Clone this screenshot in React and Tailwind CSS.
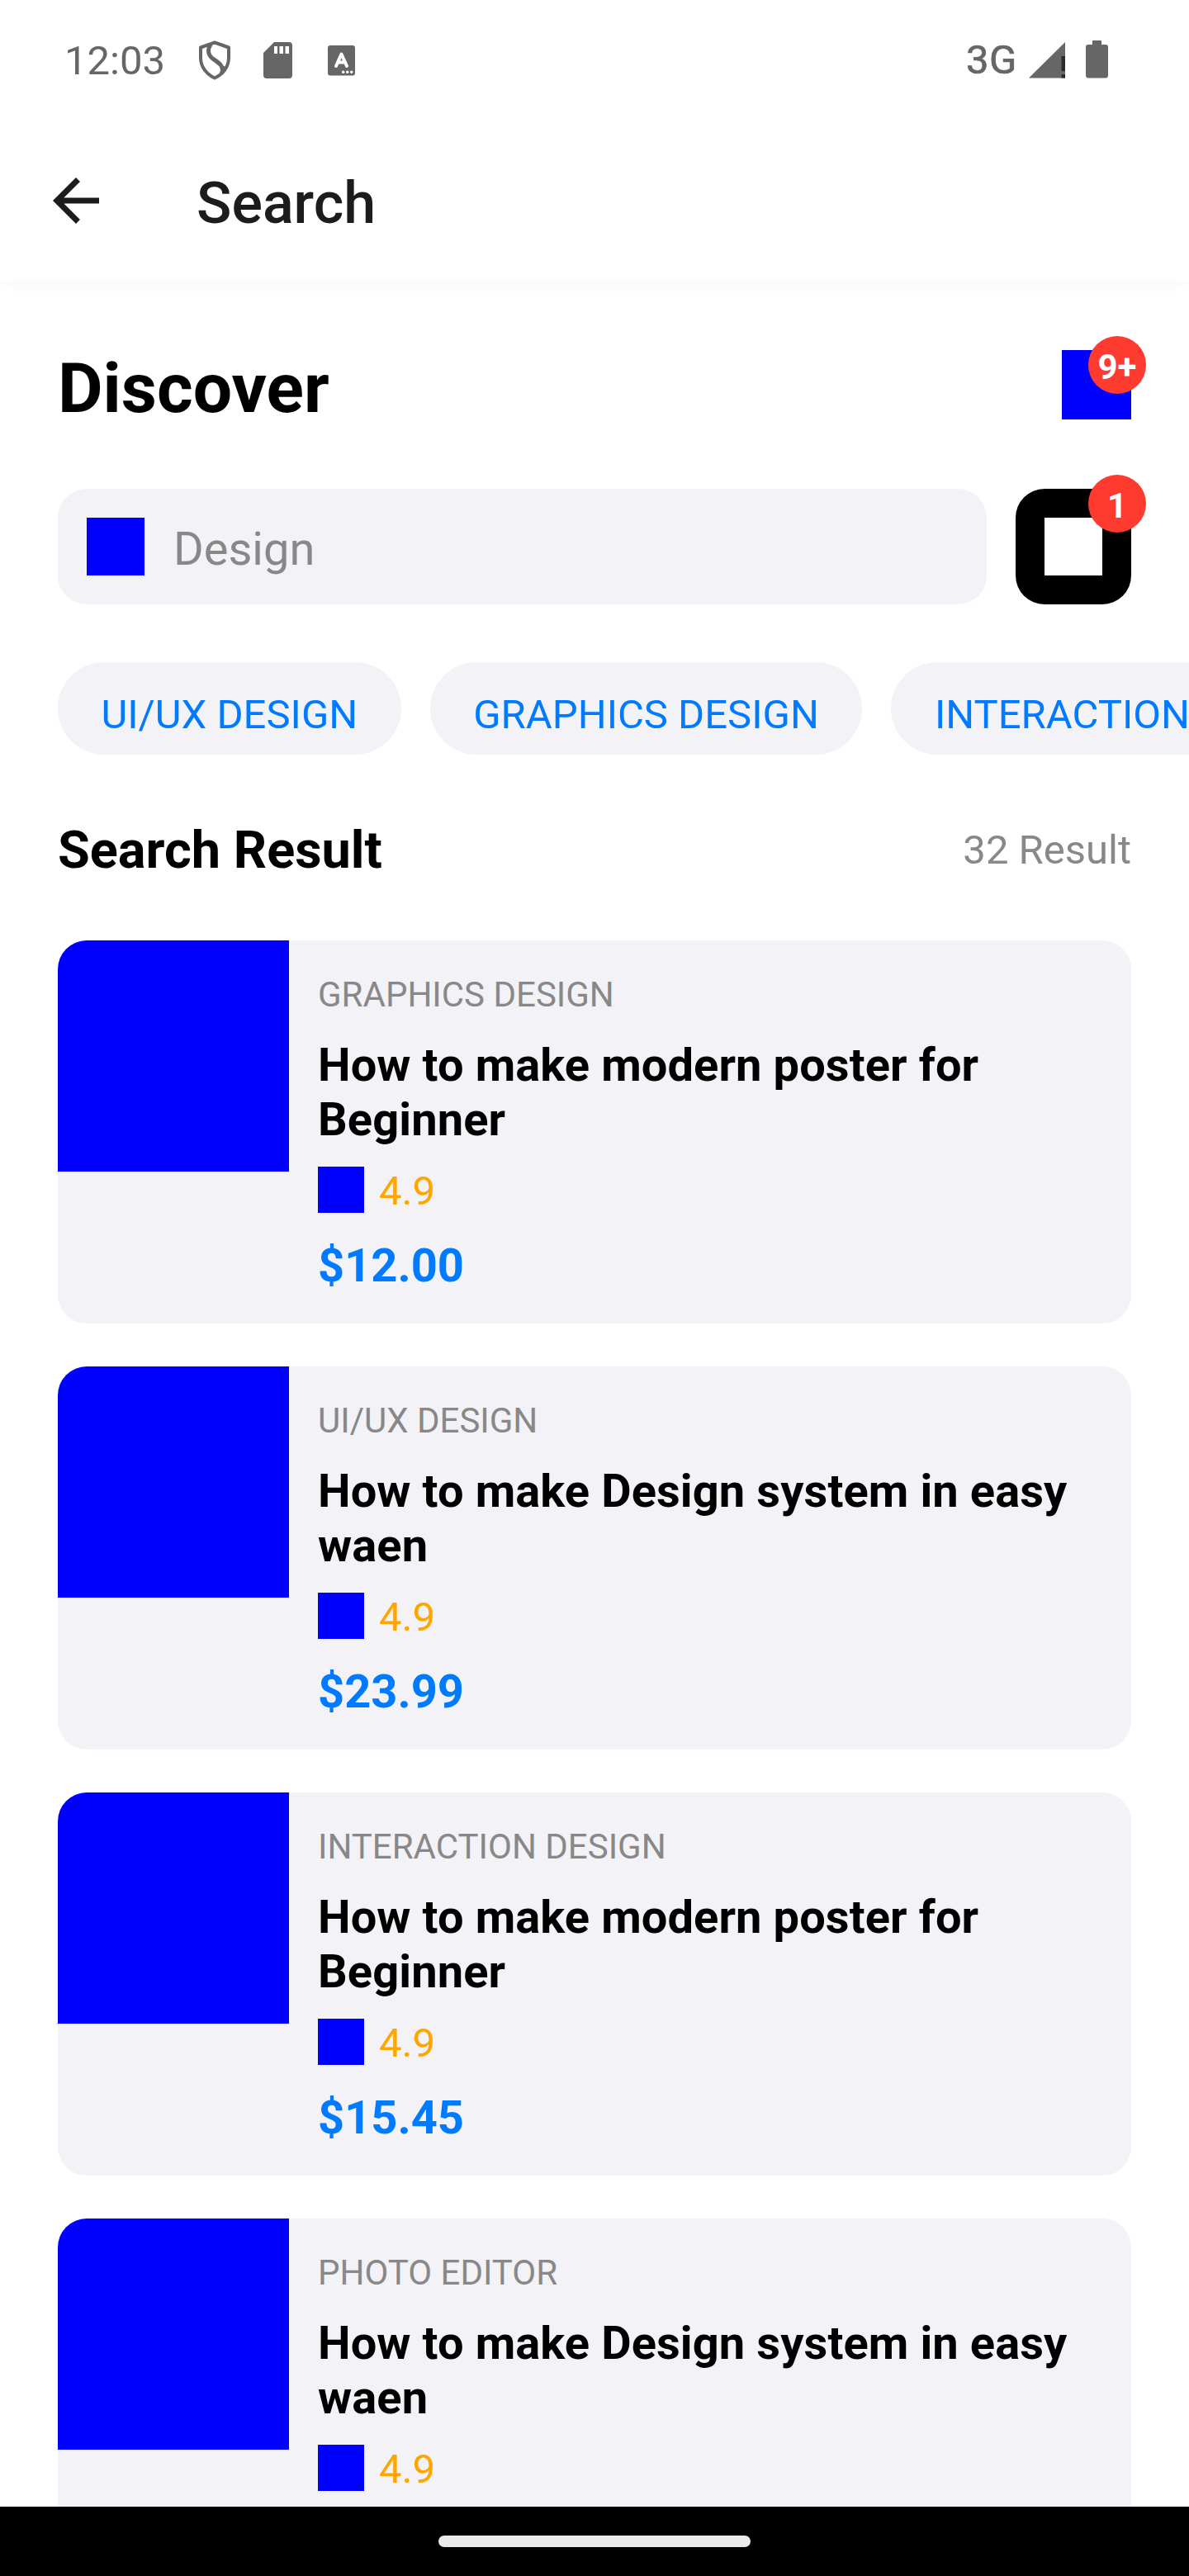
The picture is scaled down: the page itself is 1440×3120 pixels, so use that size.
const courses = [
  { category: "GRAPHICS DESIGN", title: "How to make modern poster for Beginner", rating: "4.9", price: "$12.00" },
  { category: "UI/UX DESIGN", title: "How to make Design system in easy waen", rating: "4.9", price: "$23.99" },
  { category: "INTERACTION DESIGN", title: "How to make modern poster for Beginner", rating: "4.9", price: "$15.45" },
  { category: "PHOTO EDITOR", title: "How to make Design system in easy waen", rating: "4.9" },
];

const chips = ["UI/UX DESIGN", "GRAPHICS DESIGN", "INTERACTION DESIGN"];

function StatusBar() {
  return (
    <div className="flex h-[185px] shrink-0 items-start pr-[98px] pl-[78px] text-[49px] leading-[58px] text-[#666666]">
      <span className="mt-[45px] w-[162px]">12:03</span>
      <svg className="mt-[48px] h-[50px] w-[40px]" viewBox="0 0 40 50" fill="none" stroke="#666666">
        <path d="M20 3.500 37 9.500V22C37 33 30 42 20 46.500 10 42 3 33 3 22V9.500Z" strokeWidth="4" strokeLinejoin="round" />
        <path d="M15 6C11 12 12 18 17 22.500C23 27 31 31 29 38" strokeWidth="5" />
        <path d="M28 41 33 33" strokeWidth="5" />
      </svg>
      <svg className="mt-[51px] ml-[39px] h-[44px] w-[35px]" viewBox="0 0 35 44">
        <path fill="#666666" fillRule="evenodd" d="M13 0H31Q35 0 35 4V40Q35 44 31 44H4Q0 44 0 40V13ZM13 5V14H17V5ZM19.500 5V14H24V5ZM26.500 5V14H31V5Z" />
      </svg>
      <svg className="mt-[55px] ml-[43px] h-[37px] w-[33px]" viewBox="0 0 33 37">
        <rect width="33" height="36.500" rx="3" fill="#666666" />
        <path d="M10 25 16.500 10.500 23 25M12.500 20.500H20.500" fill="none" stroke="#fff" strokeWidth="4" strokeLinecap="round" strokeLinejoin="round" />
        <circle cx="18.700" cy="32.300" r="1.700" fill="#fff" />
        <circle cx="23.700" cy="32.300" r="1.700" fill="#fff" />
        <circle cx="28.700" cy="32.300" r="1.700" fill="#fff" />
      </svg>
      <span className="mt-[44px] ml-auto tracking-[0.5px] [-webkit-text-stroke:0.7px_#666666]">3G</span>
      <svg className="mt-[50px] ml-[14px] h-[45px] w-[45px]" viewBox="0 0 45 45">
        <path d="M0 44.500 44 1V44.500Z" fill="#666666" />
        <path d="M39.500 18H44V36H39.500ZM39.500 40H44V44.500H39.500Z" fill="#2b2b2b" />
      </svg>
      <svg className="mt-[49px] ml-[24px] h-[46px] w-[27px]" viewBox="0 0 27 46">
        <path d="M8 0H19V5H24Q27 5 27 8V42Q27 45.500 24 45.500H3Q0 45.500 0 42V8Q0 5 3 5H8Z" fill="#666666" />
      </svg>
    </div>
  );
}

function Badge({ children }) {
  return (
    <div className="absolute -top-[17px] -right-[18px] flex size-[70px] items-center justify-center rounded-full bg-[#ff3b30] pt-[5px] text-[42px] leading-[50px] font-bold text-white">
      {children}
    </div>
  );
}

function CourseCard({ course }) {
  return (
    <div className="flex h-[464px] shrink-0 gap-[35px] overflow-hidden rounded-[35px] bg-[#f2f2f7]">
      <div className="size-[280px] shrink-0 bg-[#0000ff]" />
      <div className="flex flex-1 flex-col pt-[41px] pr-[35px]">
        <div className="text-[42px] leading-[50px] text-[#888888]">{course.category}</div>
        <div className="mt-[27px] text-[56px] leading-[66px] font-bold tracking-[0.1px] text-black">{course.title}</div>
        <div className="mt-[24px] flex h-[56px] gap-[18px]">
          <div className="size-[56px] bg-[#0000ff]" />
          <span className="pt-[2px] text-[49px] leading-[56px] text-[#ffa500]">{course.rating}</span>
        </div>
        {course.price && (
          <div className="mt-[31px] text-[56px] leading-[66px] font-bold text-[#007aff]">{course.price}</div>
        )}
      </div>
    </div>
  );
}

export default function App() {
  return (
    <div className="flex h-[3120px] w-[1440px] flex-col overflow-hidden bg-white font-['Roboto',sans-serif]">
      <header className="h-[340px] shrink-0 bg-white shadow-[0_4px_18px_rgba(0,0,0,0.03)]">
        <StatusBar />
        <div className="flex items-center pl-[50px]">
          <svg className="mt-[14px] size-[84px]" viewBox="0 0 24 24" fill="#1c1c1e">
            <path d="M20 11H7.830l5.590-5.590L12 4l-8 8 8 8 1.410-1.410L7.830 13H20v-2z" />
          </svg>
          <h1 className="mt-[20px] ml-[104px] text-[70px] leading-[82px] font-medium text-[#1c1c1e]">Search</h1>
        </div>
      </header>

      <main className="flex min-h-0 flex-1 flex-col overflow-hidden px-[70px] pt-[84px]">
        <div className="flex h-[84px] shrink-0 items-center justify-between">
          <h2 className="pt-[9px] text-[84px] leading-[98px] font-bold text-black">Discover</h2>
          <div className="relative size-[84px] bg-[#0000ff]">
            <Badge>9+</Badge>
          </div>
        </div>

        <div className="mt-[84px] flex shrink-0 gap-[35px]">
          <div className="flex h-[140px] flex-1 items-center gap-[35px] rounded-[35px] bg-[#f2f2f7] px-[35px]">
            <div className="size-[70px] bg-[#0000ff]" />
            <span className="pt-[6px] text-[56px] leading-[66px] text-[#888888]">Design</span>
          </div>
          <div className="relative flex size-[140px] items-center justify-center rounded-[35px] bg-black">
            <div className="size-[70px] bg-white" />
            <Badge>1</Badge>
          </div>
        </div>

        <div className="mt-[70px] -mr-[70px] flex shrink-0 gap-[35px] overflow-hidden">
          {chips.map((chip) => (
            <div key={chip} className="h-[112px] shrink-0 rounded-full bg-[#f2f2f7] px-[52.5px] pt-[35px] text-[49px] leading-[57px] whitespace-nowrap text-[#007aff]">
              {chip}
            </div>
          ))}
        </div>

        <div className="mt-[79px] flex h-[74px] shrink-0 items-center justify-between">
          <h3 className="text-[63px] leading-[74px] font-bold text-black">Search Result</h3>
          <span className="text-[49px] leading-[58px] text-[#888888]">32 Result</span>
        </div>

        <div className="mt-[72px] flex flex-col gap-[52px]">
          {courses.map((course) => (
            <CourseCard key={course.category} course={course} />
          ))}
        </div>
      </main>

      <footer className="flex h-[84px] shrink-0 items-center justify-center bg-black">
        <div className="h-[14px] w-[378px] rounded-full bg-[#ebebeb]" />
      </footer>
    </div>
  );
}
